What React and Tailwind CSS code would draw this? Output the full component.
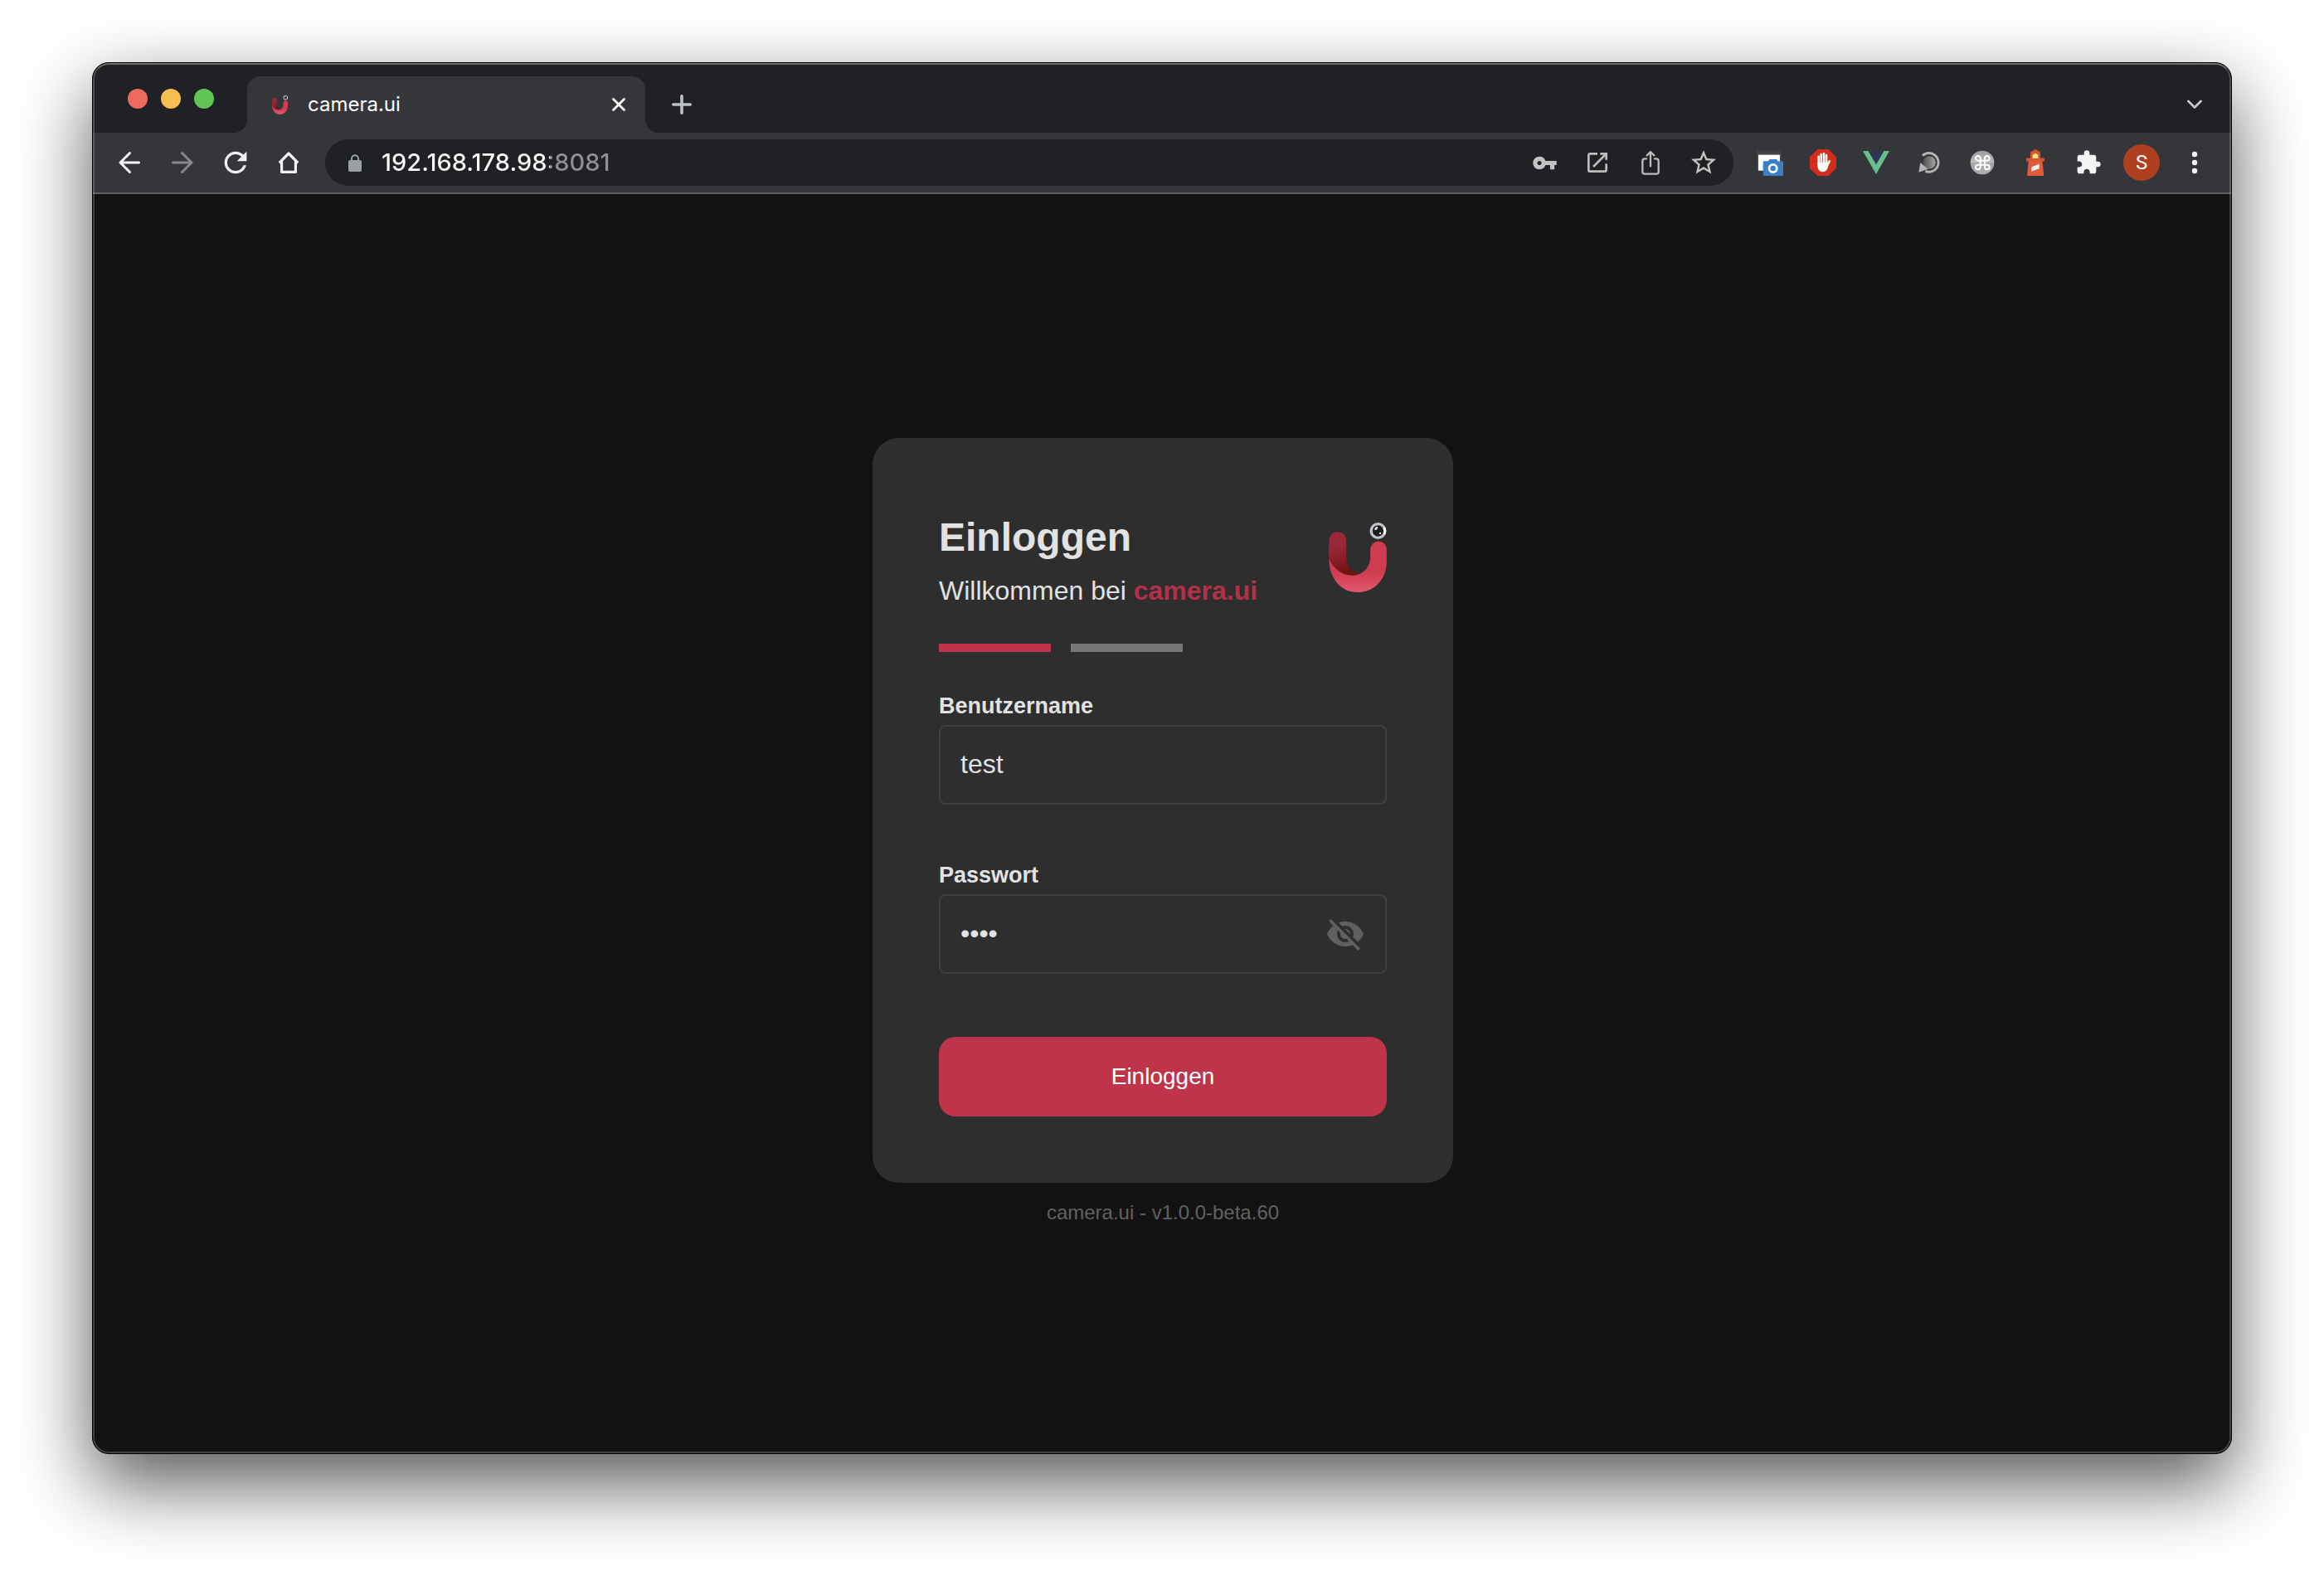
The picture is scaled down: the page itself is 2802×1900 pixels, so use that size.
import React, { useState } from "react";
import {
  MdRefresh,
  MdVpnKey,
  MdStarBorder,
  MdExtension,
  MdVisibilityOff,
} from "react-icons/md";

function Logo({ id, className }) {
  return (
    <svg viewBox="0 0 209 252" className={className} aria-hidden="true">
      <defs>
        <linearGradient id={id + "-back"} gradientUnits="userSpaceOnUse" x1="24" y1="90" x2="50" y2="190">
          <stop offset="0" stopColor="#982738" />
          <stop offset="0.4" stopColor="#8c1f2a" />
          <stop offset="1" stopColor="#6a120e" />
        </linearGradient>
        <linearGradient id={id + "-front"} gradientUnits="userSpaceOnUse" x1="0" y1="180" x2="0" y2="252">
          <stop offset="0" stopColor="#cf3b4f" />
          <stop offset="1" stopColor="#e2586f" />
        </linearGradient>
      </defs>
      <path
        d="M1 64A31 31 0 0 1 63 64V125C63 158 85 182 116 183C106 189 95 191 84 191C52 191 20 172 0 132Z"
        fill={`url(#${id}-back)`}
      />
      <path
        d="M0 132C20 172 52 191 84 191C125 191 150 160 150 125V97A29.500 29.500 0 0 1 209 97V140C209 205 165 252 104 252C45 252 2 205 0 132Z"
        fill={`url(#${id}-front)`}
      />
      <circle cx="178" cy="30" r="30" fill="#c3c4c8" />
      <path d="M203 16A29 29 0 0 1 203 44L195 38A20 20 0 0 0 195 22Z" fill="#fff" />
      <circle cx="178" cy="30" r="20" fill="#1a1d21" />
      <ellipse cx="171" cy="21" rx="7" ry="4" fill="#fff" transform="rotate(-40 171 21)" />
      <circle cx="186" cy="39" r="3.500" fill="#fff" />
    </svg>
  );
}

const line = { fill: "none", stroke: "currentColor", strokeLinecap: "round", strokeLinejoin: "round" };

function BackIcon({ className }) {
  return (
    <svg viewBox="0 0 32 32" className={className} {...line} strokeWidth="3">
      <path d="M27.500 16H5M16.500 4.500L5 16l11.500 11.500" />
    </svg>
  );
}

function HomeIcon() {
  return (
    <svg viewBox="0 0 32 32" className="size-8" {...line} strokeWidth="3.200">
      <path d="M4.700 16.300L16 5l11.300 11.300" strokeLinecap="butt" />
      <path d="M7.600 14.500V27.400H24.400V14.500" />
    </svg>
  );
}

function LockIcon() {
  return (
    <svg viewBox="0 0 48 63" className="h-[21px] w-4 shrink-0 text-[#9aa0a6]" aria-hidden="true">
      <rect x="0" y="21" width="48" height="42" rx="6" fill="currentColor" />
      <path d="M12 24V16A12 12 0 0 1 36 16V24" fill="none" stroke="currentColor" strokeWidth="6" />
    </svg>
  );
}

function OpenIcon() {
  return (
    <svg viewBox="0 0 96 96" className="size-8" fill="none" stroke="currentColor" strokeWidth="8">
      <path d="M48 16H22Q16 16 16 22V74Q16 80 22 80H74Q80 80 80 74V52" />
      <path d="M33 63L78 18" />
      <path d="M58 16H80V38" />
    </svg>
  );
}

function ShareIcon() {
  return (
    <svg viewBox="0 0 96 96" className="size-8" {...line} strokeWidth="7">
      <path d="M33 34H27Q19 34 19 42V81Q19 89 27 89H69Q77 89 77 81V42Q77 34 69 34H63" />
      <path d="M48 61V10M35 22L48 9L61 22" />
    </svg>
  );
}

function CaptureIcon() {
  return (
    <svg viewBox="0 0 96 96" className="size-8">
      <rect x="1" y="5" width="87" height="72" fill="#4a4a4a" />
      <rect x="1" y="5" width="87" height="10" fill="#414141" />
      <rect x="6" y="20" width="78" height="57" fill="#fff" />
      <path d="M42 43L46 36H72L76 43H92Q96 43 96 47V92Q96 96 92 96H27Q23 96 23 92V47Q23 43 27 43Z" fill="#3a80c9" />
      <circle cx="59" cy="69" r="14" fill="none" stroke="#fff" strokeWidth="8" />
    </svg>
  );
}

function BlockIcon() {
  return (
    <svg viewBox="0 0 96 96" className="size-8">
      <path d="M28 0H68L96 28V68L68 96H28L0 68V28Z" fill="#d42d20" />
      <g stroke="#fff" strokeWidth="7.500" strokeLinecap="round" fill="none">
        <path d="M32 26V52M41 18V50M51 15V50M60 21V54" />
        <path d="M71 43L61 62" strokeWidth="8" />
      </g>
      <path d="M28 48H64L67 60Q63 82 47 82Q29 82 28 58Z" fill="#fff" />
    </svg>
  );
}

function VueIcon() {
  return (
    <svg viewBox="0 0 96 96" className="size-8">
      <path d="M0 6H20L48 54L76 6H96L48 90Z" fill="#67bf8b" />
      <path d="M20 6H37L48 24L59 6H76L48 54Z" fill="#2f365a" />
    </svg>
  );
}

function ReloadDiscIcon() {
  return (
    <svg viewBox="0 0 96 96" className="size-8">
      <defs>
        <linearGradient id="disc" x1="0" y1="0" x2="1" y2="0">
          <stop offset="0" stopColor="#4a4a4c" />
          <stop offset="1" stopColor="#a9a9a9" />
        </linearGradient>
      </defs>
      <circle cx="48" cy="48" r="25" fill="url(#disc)" stroke="#26272a" strokeWidth="3" />
      <path d="M24 23A34 34 0 1 1 34 79" fill="none" stroke="#b4b4b4" strokeWidth="9" />
      <path d="M16 48L44 71L10 83Z" fill="#b4b4b4" />
    </svg>
  );
}

function CommandIcon() {
  return (
    <svg viewBox="0 0 96 96" className="size-8">
      <defs>
        <linearGradient id="cmd" x1="0" y1="0" x2="0" y2="1">
          <stop offset="0" stopColor="#9b9b9b" />
          <stop offset="0.480" stopColor="#bdbdbd" />
          <stop offset="0.520" stopColor="#a6a6a6" />
          <stop offset="1" stopColor="#acacac" />
        </linearGradient>
      </defs>
      <circle cx="48" cy="48" r="43" fill="url(#cmd)" />
      <path
        d="M41 41V33A8.500 8.500 0 1 0 32.500 41H65.500A8.500 8.500 0 1 0 57 33V65A8.500 8.500 0 1 0 65.500 56H32.500A8.500 8.500 0 1 0 41 65V41"
        fill="none"
        stroke="#fff"
        strokeWidth="6"
      />
    </svg>
  );
}

function LighthouseIcon() {
  return (
    <svg viewBox="0 0 96 96" className="size-8">
      <path d="M48 0L66 11V32H80V43H73L79 96H18L23 43H15V32H30V11Z" fill="#e25b38" />
      <path d="M48 0L66 11V32H80V43H15V32H30V11Z" fill="#d9532f" />
      <path d="M38 33V20L48 14L58 20V33Z" fill="#fbe67a" />
      <path d="M35 64L62 53V70L33 80Z" fill="#f4f1ef" />
    </svg>
  );
}

function ToolButton({ label, className = "text-[#f1f3f4]", children }) {
  return (
    <button type="button" aria-label={label} className={"flex h-14 w-16 shrink-0 items-center justify-center " + className}>
      {children}
    </button>
  );
}

function TabStrip() {
  return (
    <div className="flex h-[84px] items-end bg-[#202124]">
      <div className="flex h-full items-center gap-4 pt-0.5 pr-10 pl-[42px]">
        <button type="button" aria-label="Schließen" className="size-6 rounded-full bg-[#ed6a5f]" />
        <button type="button" aria-label="Minimieren" className="size-6 rounded-full bg-[#f6be50]" />
        <button type="button" aria-label="Maximieren" className="size-6 rounded-full bg-[#61c555]" />
      </div>
      <div className="relative flex h-[68px] w-[480px] items-center rounded-t-2xl bg-[#35363a] pr-6 pl-[30px]">
        <span className="absolute bottom-0 -left-4 size-4 bg-[#35363a]">
          <span className="block size-4 rounded-br-2xl bg-[#202124]" />
        </span>
        <span className="absolute -right-4 bottom-0 size-4 bg-[#35363a]">
          <span className="block size-4 rounded-bl-2xl bg-[#202124]" />
        </span>
        <Logo id="favicon" className="h-[23px] w-[19px]" />
        <span className="ml-6 flex-1 text-2xl text-white">camera.ui</span>
        <button type="button" aria-label="Tab schließen" className="text-white">
          <svg viewBox="0 0 16 16" className="size-4" {...line} strokeWidth="2.800">
            <path d="M1.500 1.500l13 13M14.500 1.500l-13 13" />
          </svg>
        </button>
      </div>
      <button type="button" aria-label="Neuer Tab" className="ml-8 flex h-[68px] items-center text-[#bdc1c6]">
        <svg viewBox="0 0 24 24" className="size-6" {...line} strokeWidth="3.600">
          <path d="M12 1.800v20.400M1.800 12h20.400" />
        </svg>
      </button>
      <button type="button" aria-label="Tabs suchen" className="mr-3 ml-auto flex h-[68px] w-16 items-center justify-center text-[#c4c7cb]">
        <svg viewBox="0 0 18 12" className="h-3 w-[18px]" {...line} strokeWidth="2.800">
          <path d="M1.500 2L9 9.500L16.500 2" />
        </svg>
      </button>
    </div>
  );
}

function Toolbar() {
  return (
    <div className="flex h-[74px] items-center border-b-2 border-[#5f6063] bg-[#35363a] px-3">
      <ToolButton label="Zurück">
        <BackIcon className="size-8" />
      </ToolButton>
      <ToolButton label="Vorwärts" className="text-[#86878a]">
        <BackIcon className="size-8 rotate-180" />
      </ToolButton>
      <ToolButton label="Neu laden">
        <MdRefresh className="size-10" />
      </ToolButton>
      <ToolButton label="Startseite">
        <HomeIcon />
      </ToolButton>
      <div className="mx-3 flex h-14 min-w-0 flex-1 items-center rounded-full bg-[#202124] pr-1 pl-7">
        <LockIcon />
        <input
          type="text"
          aria-label="Adresse"
          defaultValue="192.168.178.98:8081"
          className="ml-6 min-w-0 flex-1 bg-[linear-gradient(90deg,#ffffff_203px,#8f9092_203px)] bg-clip-text text-[29px] font-medium text-transparent outline-none"
        />
        <ToolButton label="Passwörter" className="text-[#c3c3c3]">
          <MdVpnKey className="size-[31px]" />
        </ToolButton>
        <ToolButton label="In App öffnen" className="text-[#bdbdbd]">
          <OpenIcon />
        </ToolButton>
        <ToolButton label="Teilen" className="text-[#bdbdbd]">
          <ShareIcon />
        </ToolButton>
        <ToolButton label="Lesezeichen" className="text-[#c3c3c3]">
          <MdStarBorder className="size-9" />
        </ToolButton>
      </div>
      <ToolButton label="Bildschirmfoto">
        <CaptureIcon />
      </ToolButton>
      <ToolButton label="Werbeblocker">
        <BlockIcon />
      </ToolButton>
      <ToolButton label="Vue Devtools">
        <VueIcon />
      </ToolButton>
      <ToolButton label="Aktualisieren">
        <ReloadDiscIcon />
      </ToolButton>
      <ToolButton label="Tastenkürzel">
        <CommandIcon />
      </ToolButton>
      <ToolButton label="Lighthouse">
        <LighthouseIcon />
      </ToolButton>
      <ToolButton label="Erweiterungen">
        <MdExtension className="size-8" />
      </ToolButton>
      <ToolButton label="Profil">
        <span className="flex size-11 items-center justify-center rounded-full bg-[#b03f20] font-[Roboto] text-2xl text-white">S</span>
      </ToolButton>
      <ToolButton label="Menü">
        <svg viewBox="0 0 32 32" className="size-8" fill="currentColor">
          <circle cx="16" cy="6" r="3.200" />
          <circle cx="16" cy="16" r="3.200" />
          <circle cx="16" cy="26" r="3.200" />
        </svg>
      </ToolButton>
    </div>
  );
}

function Field({ id, label, className, children, ...inputProps }) {
  return (
    <div className={className}>
      <label htmlFor={id} className="mb-1.5 block text-[27px] leading-[34px] font-bold">
        {label}
      </label>
      <div className="flex h-24 items-center rounded-lg border-2 border-[#404040] px-6">
        <input id={id} className="h-full min-w-0 flex-1 bg-transparent pb-0.5 text-[32px] outline-none" {...inputProps} />
        {children}
      </div>
    </div>
  );
}

function LoginCard() {
  const [visible, setVisible] = useState(false);
  return (
    <form
      onSubmit={(e) => e.preventDefault()}
      className="w-[700px] rounded-[32px] bg-[#2e2e2e] p-20 text-[#e2e2e2]"
    >
      <div className="flex items-center justify-between">
        <div>
          <h1 className="text-5xl leading-[80px] font-bold">Einloggen</h1>
          <p className="text-[32px] leading-[48px]">
            Willkommen bei <b className="text-[#b23149]">camera.ui</b>
          </p>
        </div>
        <Logo id="logo" className="h-[84px] w-[70px]" />
      </div>
      <div className="mt-10 flex gap-6">
        <span className="h-2.5 w-1/4 bg-[#c0344b]" />
        <span className="h-2.5 w-1/4 bg-[#777777]" />
      </div>
      <Field id="username" label="Benutzername" className="mt-12" type="text" defaultValue="test" />
      <Field
        id="password"
        label="Passwort"
        className="mt-[68px]"
        type={visible ? "text" : "password"}
        defaultValue="test"
      >
        <button type="button" aria-label="Passwort anzeigen" onClick={() => setVisible(!visible)} className="text-[#606060]">
          <MdVisibilityOff className="size-12" />
        </button>
      </Field>
      <button type="submit" className="mt-[76px] h-24 w-full rounded-[20px] bg-[#c0344b] text-[28px] text-white">
        Einloggen
      </button>
    </form>
  );
}

export default function App() {
  return (
    <div className="flex min-h-screen bg-white px-[111px] pt-[75px] pb-[147px]">
      <div className="relative flex flex-1 flex-col overflow-hidden rounded-[20px] border border-black bg-[#121212] font-[Inter,sans-serif] shadow-[0_36px_90px_rgba(0,0,0,0.66)]">
        <TabStrip />
        <Toolbar />
        <main className="flex flex-1 flex-col items-center justify-center pt-5 pl-0.5 font-['Liberation_Sans',Arial,sans-serif]">
          <LoginCard />
          <p className="mt-5 text-2xl text-[#616161]">camera.ui - v1.0.0-beta.60</p>
        </main>
        <div className="pointer-events-none absolute inset-0 rounded-[19px] border-2 border-white/20 border-t-white/35" />
      </div>
    </div>
  );
}
